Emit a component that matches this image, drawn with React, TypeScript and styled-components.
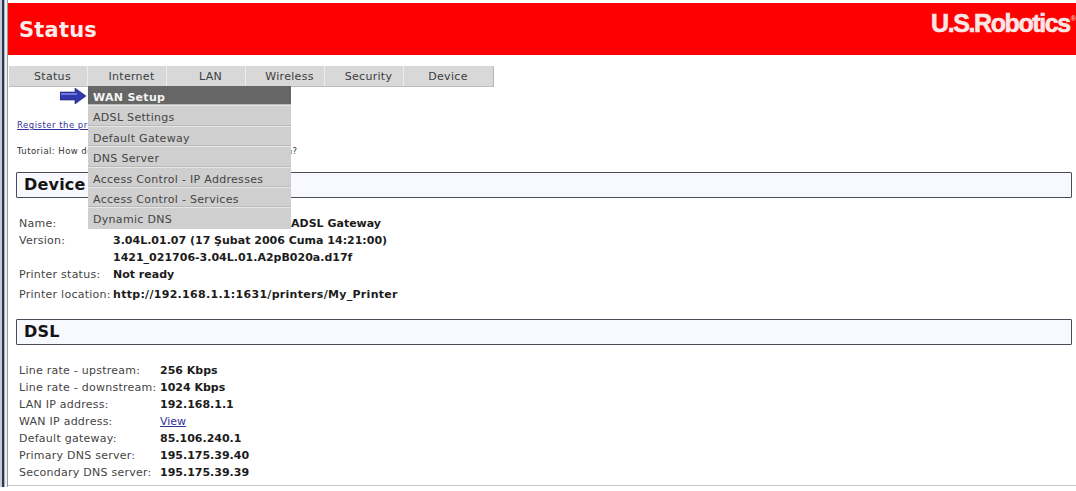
import React from 'react';
import styled, { createGlobalStyle } from 'styled-components';

const GlobalStyle = createGlobalStyle`
  html, body {
    margin: 0;
    padding: 0;
    background: #fff;
    overflow: hidden;
  }
  #root {
    height: 491px;
  }
`;

const Frame = styled.div`
  display: flex;
  width: 1076px;
  height: 491px;
  font-family: 'DejaVu Sans', Verdana, sans-serif;
  font-size: 11px;
  color: #333;
  overflow: hidden;
`;

const WindowEdge = styled.div`
  width: 8px;
  height: 487px;
  flex-shrink: 0;
  box-sizing: border-box;
  background: linear-gradient(90deg, #c9ced6 0 2px, #2c3650 2px 4px, #aab3c4 4px 5px, #eef0f4 5px 7px, #9a9a9a 7px 8px);
`;

const Page = styled.div`
  flex: 1;
  min-width: 0;
  height: 486px;
  padding-top: 3px;
  box-sizing: border-box;
  border-bottom: 1px solid #c8c8c8;
`;

const Header = styled.header`
  height: 52px;
  background: #fe0000;
  display: flex;
  justify-content: space-between;
  padding: 7px 0 0 11px;
  box-sizing: border-box;
`;

const Title = styled.h1`
  margin: 7px 0 0;
  font-size: 21px;
  line-height: 26px;
  font-weight: bold;
  color: #fbecec;
  letter-spacing: 0.2px;
`;

const Logo = styled.div`
  font-family: 'Liberation Sans', Arial, sans-serif;
  font-size: 25px;
  line-height: 26px;
  font-weight: bold;
  letter-spacing: -1.4px;
  color: #fbe6e6;
  -webkit-text-stroke: 0.6px #fbe6e6;
  white-space: nowrap;

  sup {
    font-size: 7px;
    line-height: 0;
    letter-spacing: 0;
    vertical-align: 11px;
    font-weight: normal;
    margin-left: 1px;
    -webkit-text-stroke: 0;
  }
`;

const NavBar = styled.nav`
  position: relative;
  display: flex;
  width: 474px;
  height: 20px;
  margin: 11px 0 0 1px;
  padding-right: 10px;
  background: #d8d8d8;
  border-right: 1px solid #b5b5b5;
  border-bottom: 1px solid #bdbdbd;
`;

const NavItem = styled.div`
  width: 79px;
  box-sizing: border-box;
  padding-left: 9px;
  text-align: center;
  line-height: 22px;
  letter-spacing: 0.3px;
  color: #3c3c3c;
  border-right: 1px solid #ececec;

  &:last-of-type {
    border-right: 0;
  }
`;

const Menu = styled.ul`
  position: absolute;
  top: 20px;
  left: 79px;
  width: 203px;
  margin: 0;
  padding: 0;
  list-style: none;
  z-index: 2;
`;

const MenuItem = styled.li<{ $active?: boolean }>`
  height: 20.4px;
  box-sizing: border-box;
  padding-left: 5px;
  line-height: 24px;
  letter-spacing: 0.3px;
  background: ${({ $active }) => ($active ? '#666666' : '#cfcfcf')};
  color: ${({ $active }) => ($active ? '#f4f4f4' : '#444')};
  font-weight: ${({ $active }) => ($active ? 'bold' : 'normal')};
  border-bottom: 1px solid #e6e6e6;
  box-shadow: inset 0 -1px 0 #b9b9b9;

  &:last-child {
    border-bottom: 0;
    box-shadow: none;
  }
`;

const ArrowRow = styled.div`
  height: 18px;
  padding: 1px 0 0 52px;
  box-sizing: border-box;

  svg {
    display: block;
  }
`;

const Content = styled.main`
  padding: 0 4px 0 8px;
`;

const RegisterLink = styled.a`
  display: block;
  margin: 15px 0 0 1px;
  font-size: 8.5px;
  line-height: 11px;
  letter-spacing: 0.5px;
  color: #33339a;
  text-decoration: underline;
`;

const Tutorial = styled.div`
  margin: 15px 0 0 1px;
  font-size: 8.5px;
  line-height: 11px;
  letter-spacing: 0.45px;
  color: #333;
`;

const SectionBox = styled.section<{ $top: number }>`
  height: 26px;
  margin-top: ${({ $top }) => $top}px;
  box-sizing: border-box;
  border: 1px solid #4a4d57;
  border-radius: 1px;
  background: #f8f8ff;
  padding-left: 7px;
  font-size: 16px;
  font-weight: bold;
  line-height: 23px;
  letter-spacing: 0.2px;
  color: #141414;
`;

const InfoGrid = styled.dl<{ $labelWidth: number; $top: number }>`
  display: grid;
  grid-template-columns: ${({ $labelWidth }) => $labelWidth}px 1fr;
  grid-auto-rows: 17px;
  margin: ${({ $top }) => $top}px 0 0 3px;
  line-height: 17px;
  white-space: nowrap;
`;

const Label = styled.dt<{ $tall?: boolean }>`
  margin-top: ${({ $tall }) => ($tall ? 3 : 0)}px;
  letter-spacing: 0.25px;
  color: #444;
`;

const Value = styled.dd<{ $tall?: boolean }>`
  margin: ${({ $tall }) => ($tall ? 3 : 0)}px 0 0;
  font-weight: bold;
  letter-spacing: ${({ $tall }) => ($tall ? 0.3 : 0)}px;
  color: #1c1c1c;

  a {
    font-weight: normal;
    color: #33339a;
    text-decoration: underline;
  }
`;

const menuItems = [
  'WAN Setup',
  'ADSL Settings',
  'Default Gateway',
  'DNS Server',
  'Access Control - IP Addresses',
  'Access Control - Services',
  'Dynamic DNS',
];

const navItems = ['Status', 'Internet', 'LAN', 'Wireless', 'Security', 'Device'];

const deviceRows: [string, string][] = [
  ['Name:', 'U.S. Robotics Wireless 108g ADSL Gateway'],
  ['Version:', '3.04L.01.07 (17 Şubat 2006 Cuma 14:21:00)'],
  ['', '1421_021706-3.04L.01.A2pB020a.d17f'],
  ['Printer status:', 'Not ready'],
  ['Printer location:', 'http://192.168.1.1:1631/printers/My_Printer'],
];

const dslRows: [string, string][] = [
  ['Line rate - upstream:', '256 Kbps'],
  ['Line rate - downstream:', '1024 Kbps'],
  ['LAN IP address:', '192.168.1.1'],
  ['WAN IP address:', 'View'],
  ['Default gateway:', '85.106.240.1'],
  ['Primary DNS server:', '195.175.39.40'],
  ['Secondary DNS server:', '195.175.39.39'],
];

const App: React.FC = () => {
  return (
    <>
      <GlobalStyle />
      <Frame>
        <WindowEdge />
        <Page>
          <Header>
            <Title>Status</Title>
            <Logo>
              U.S.Robotics<sup>®</sup>
            </Logo>
          </Header>

          <NavBar>
            {navItems.map((item) => (
              <NavItem key={item}>{item}</NavItem>
            ))}
            <Menu>
              {menuItems.map((item, index) => (
                <MenuItem key={item} $active={index === 0}>
                  {item}
                </MenuItem>
              ))}
            </Menu>
          </NavBar>

          <ArrowRow>
            <svg width="26" height="16" viewBox="0 0 26 16">
              <path d="M0 4h15V0l11 8-11 8v-4H0z" fill="#3238ad" stroke="#1c2270" strokeWidth="0.6" />
              <path d="M1 6h16" stroke="#6f78d8" strokeWidth="2" />
            </svg>
          </ArrowRow>

          <Content>
            <RegisterLink>Register the product online with U.S. Robotics</RegisterLink>
            <Tutorial>Tutorial: How do I configure your ADSL Internet connection?</Tutorial>

            <SectionBox $top={15}>Device Information</SectionBox>
            <InfoGrid $labelWidth={94} $top={17}>
              {deviceRows.map(([label, value], index) => (
                <React.Fragment key={value}>
                  <Label $tall={index === 4}>{label}</Label>
                  <Value $tall={index === 4}>{value}</Value>
                </React.Fragment>
              ))}
            </InfoGrid>

            <SectionBox $top={19}>DSL</SectionBox>
            <InfoGrid $labelWidth={141} $top={17}>
              {dslRows.map(([label, value]) => (
                <React.Fragment key={label}>
                  <Label>{label}</Label>
                  <Value>{value === 'View' ? <a>View</a> : value}</Value>
                </React.Fragment>
              ))}
            </InfoGrid>
          </Content>
        </Page>
      </Frame>
    </>
  );
};

export default App;
